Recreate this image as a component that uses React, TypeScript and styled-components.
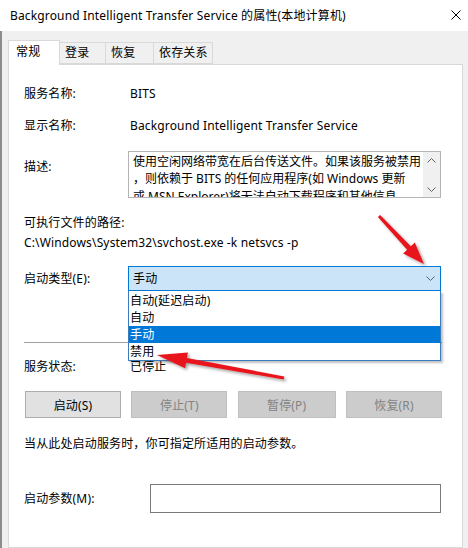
import React from "react";
import styled, { createGlobalStyle } from "styled-components";

const GlobalStyle = createGlobalStyle`
  html, body { margin: 0; padding: 0; background: #ffffff; }
  body {
    font-family: "Noto Sans", "Noto Sans CJK SC", sans-serif;
    font-size: 12px;
    letter-spacing: 0.15px;
    color: #000;
  }
  * { box-sizing: border-box; }
`;

const Window = styled.div`
  position: relative;
  width: 468px;
  height: 548px;
  overflow: hidden;
  background: #f0f0f0;
  display: flex;
  flex-direction: column;
`;

const TitleBar = styled.div`
  height: 31px;
  flex: 0 0 31px;
  background: #ffffff;
  display: flex;
  align-items: center;
  justify-content: space-between;
  padding: 0 7px 0 10px;
  font-size: 12px;
`;

const TitleText = styled.span`
  line-height: 16px;
  white-space: nowrap;
`;

const CloseIcon = styled.svg`
  width: 10px;
  height: 10px;
  margin-bottom: 1px;
`;

const Body = styled.div`
  flex: 1;
  border-left: 2px solid #8c8c8c;
  padding: 9px 5px 0 6px;
  display: flex;
  flex-direction: column;
`;

const TabRow = styled.div`
  display: flex;
  align-items: flex-end;
  height: 24px;
  position: relative;
  z-index: 2;
`;

const Tab = styled.div<{ $w: number; $active?: boolean }>`
  width: ${(p) => p.$w}px;
  height: ${(p) => (p.$active ? 25 : 22)}px;
  margin-bottom: ${(p) => (p.$active ? -1 : 0)}px;
  background: ${(p) => (p.$active ? "#ffffff" : "#f0f0f0")};
  border: 1px solid #d9d9d9;
  border-bottom: ${(p) => (p.$active ? "none" : "1px solid #d9d9d9")};
  border-left: ${(p) => (p.$active ? "1px solid #d9d9d9" : "none")};
  padding-left: ${(p) => (p.$active ? 7 : 5)}px;
  padding-top: ${(p) => (p.$active ? 3 : 2)}px;
  line-height: 16px;
  white-space: nowrap;
`;

const Panel = styled.div`
  flex: 1;
  background: #ffffff;
  border: 1px solid #d9d9d9;
  padding: 21px 20px 0 15px;
  display: flex;
  flex-direction: column;
`;

const Row = styled.div<{ $mt: number }>`
  display: flex;
  align-items: center;
  margin-top: ${(p) => p.$mt}px;
  line-height: 16px;
  position: relative;
`;

const Label = styled.div<{ $w?: number; $pt?: number }>`
  width: ${(p) => p.$w ?? 106}px;
  flex: 0 0 auto;
  white-space: nowrap;
  align-self: ${(p) => (p.$pt ? "flex-start" : "center")};
  padding-top: ${(p) => p.$pt ?? 0}px;
`;

const Value = styled.div`
  white-space: nowrap;
`;

const Line = styled.div<{ $mt: number }>`
  margin-top: ${(p) => p.$mt}px;
  line-height: 16px;
  white-space: nowrap;
`;

const DescBox = styled.div`
  margin-left: -2px;
  width: 313px;
  height: 47px;
  border: 1px solid #b4b4b4;
  display: flex;
  overflow: hidden;
`;

const DescText = styled.div`
  flex: 1;
  padding: 1px 0 0 4px;
  line-height: 17.3px;
  letter-spacing: 0;
  white-space: nowrap;
  overflow: hidden;
`;

const ScrollBar = styled.div`
  width: 17px;
  flex: 0 0 17px;
  background: #f0f0f0;
  display: flex;
  flex-direction: column;
  justify-content: space-between;
  align-items: center;
  padding: 6px 0 5px;
`;

const Chevron = styled.svg`
  width: 9px;
  height: 5px;
`;

const ComboWrap = styled.div`
  position: relative;
  margin-left: -2px;
  width: 313px;
`;

const Combo = styled.div`
  height: 25px;
  background: #cce4f7;
  border: 1px solid #0078d7;
  display: flex;
  align-items: center;
  justify-content: space-between;
  padding: 0 5px 0 4px;
`;

const DropList = styled.div`
  position: absolute;
  left: 0;
  top: 25px;
  width: 313px;
  background: #ffffff;
  border: 1px solid #3a7bbf;
  border-top: none;
  box-shadow: 2px 2px 2px rgba(0, 0, 0, 0.25);
  z-index: 3;
  padding-top: 1px;
`;

const DropItem = styled.div<{ $sel?: boolean }>`
  height: 17px;
  line-height: 17px;
  padding-left: 1px;
  background: ${(p) => (p.$sel ? "#0078d7" : "transparent")};
  color: ${(p) => (p.$sel ? "#ffffff" : "#000")};
  white-space: nowrap;
`;

const Separator = styled.div`
  margin-top: 51px;
  height: 1px;
  background: #a0a0a0;
`;

const ButtonRow = styled.div`
  margin-top: 16px;
  margin-left: 1px;
  display: flex;
  justify-content: space-between;
`;

const Btn = styled.div<{ $disabled?: boolean; $w: number }>`
  width: ${(p) => p.$w}px;
  height: 27px;
  display: flex;
  align-items: center;
  justify-content: center;
  background: ${(p) => (p.$disabled ? "#cccccc" : "#e1e1e1")};
  border: 1px solid ${(p) => (p.$disabled ? "#bfbfbf" : "#adadad")};
  color: ${(p) => (p.$disabled ? "#838383" : "#000")};
  white-space: nowrap;
`;

const Input = styled.div`
  width: 291px;
  height: 29px;
  border: 1px solid #7a7a7a;
  background: #fff;
`;

const Overlay = styled.svg`
  position: absolute;
  left: 0;
  top: 0;
  width: 468px;
  height: 548px;
  pointer-events: none;
  z-index: 10;
`;

type Pt = [number, number];

function arrowPoints(tail: Pt, tip: Pt, wt: number, ws: number, hl: number, hw: number): string {
  const dx = tip[0] - tail[0];
  const dy = tip[1] - tail[1];
  const len = Math.hypot(dx, dy);
  const ux = dx / len;
  const uy = dy / len;
  const nx = -uy;
  const ny = ux;
  const bx = tip[0] - ux * hl;
  const by = tip[1] - uy * hl;
  const pts: Pt[] = [
    [tail[0] + (nx * wt) / 2, tail[1] + (ny * wt) / 2],
    [bx + (nx * ws) / 2, by + (ny * ws) / 2],
    [bx + (nx * hw) / 2, by + (ny * hw) / 2],
    tip,
    [bx - (nx * hw) / 2, by - (ny * hw) / 2],
    [bx - (nx * ws) / 2, by - (ny * ws) / 2],
    [tail[0] - (nx * wt) / 2, tail[1] - (ny * wt) / 2],
  ];
  return pts.map((p) => `${p[0].toFixed(1)},${p[1].toFixed(1)}`).join(" ");
}

const ChevronDown = () => (
  <Chevron viewBox="0 0 9 5">
    <polyline points="0.5,0.5 4.5,4.5 8.5,0.5" fill="none" stroke="#606060" strokeWidth="1" />
  </Chevron>
);

const ChevronUp = () => (
  <Chevron viewBox="0 0 9 5">
    <polyline points="0.5,4.5 4.5,0.5 8.5,4.5" fill="none" stroke="#606060" strokeWidth="1" />
  </Chevron>
);

export default function App() {
  const tabs = [
    { t: "常规", w: 52, active: true },
    { t: "登录", w: 46 },
    { t: "恢复", w: 48 },
    { t: "依存关系", w: 59 },
  ];
  return (
    <>
      <GlobalStyle />
      <Window>
        <TitleBar>
          <TitleText>Background Intelligent Transfer Service 的属性(本地计算机)</TitleText>
          <CloseIcon viewBox="0 0 10 10">
            <path d="M0.5 0.5 L9.5 9.5 M9.5 0.5 L0.5 9.5" stroke="#000" strokeWidth="1" fill="none" />
          </CloseIcon>
        </TitleBar>
        <Body>
          <TabRow>
            {tabs.map((tb) => (
              <Tab key={tb.t} $w={tb.w} $active={tb.active}>
                {tb.t}
              </Tab>
            ))}
          </TabRow>
          <Panel>
            <Row $mt={0}>
              <Label>服务名称:</Label>
              <Value>BITS</Value>
            </Row>
            <Row $mt={16}>
              <Label>显示名称:</Label>
              <Value>Background Intelligent Transfer Service</Value>
            </Row>
            <Row $mt={17}>
              <Label $pt={8}>描述:</Label>
              <DescBox>
                <DescText>
                  <div>使用空闲网络带宽在后台传送文件。如果该服务被禁用</div>
                  <div>，则依赖于 BITS 的任何应用程序(如 Windows 更新</div>
                  <div>或 MSN Explorer)将无法自动下载程序和其他信息</div>
                </DescText>
                <ScrollBar>
                  <ChevronUp />
                  <ChevronDown />
                </ScrollBar>
              </DescBox>
            </Row>
            <Line $mt={17}>可执行文件的路径:</Line>
            <Line $mt={4}>C:\Windows\System32\svchost.exe -k netsvcs -p</Line>
            <Row $mt={15}>
              <Label>启动类型(E):</Label>
              <ComboWrap>
                <Combo>
                  <span>手动</span>
                  <ChevronDown />
                </Combo>
                <DropList>
                  <DropItem>自动(延迟启动)</DropItem>
                  <DropItem>自动</DropItem>
                  <DropItem $sel>手动</DropItem>
                  <DropItem>禁用</DropItem>
                </DropList>
              </ComboWrap>
            </Row>
            <Separator />
            <Row $mt={16}>
              <Label>服务状态:</Label>
              <Value>已停止</Value>
            </Row>
            <ButtonRow>
              <Btn $w={96}>启动(S)</Btn>
              <Btn $w={96} $disabled>停止(T)</Btn>
              <Btn $w={98} $disabled>暂停(P)</Btn>
              <Btn $w={96} $disabled>恢复(R)</Btn>
            </ButtonRow>
            <Line $mt={18}>当从此处启动服务时，你可指定所适用的启动参数。</Line>
            <Row $mt={32}>
              <Label $w={126}>启动参数(M):</Label>
              <Input />
            </Row>
          </Panel>
        </Body>
        <Overlay viewBox="0 0 468 548">
          <defs>
            <filter id="sh" x="-20%" y="-20%" width="140%" height="140%">
              <feDropShadow dx="2" dy="2" stdDeviation="1.5" floodColor="#000" floodOpacity="0.35" />
            </filter>
          </defs>
          <polygon
            points={arrowPoints([379, 216], [424, 264], 3, 5, 22, 16)}
            fill="#e8171d"
            filter="url(#sh)"
          />
          <polygon
            points={arrowPoints([284, 378], [157, 355], 3, 5, 30, 16)}
            fill="#e8171d"
            filter="url(#sh)"
          />
        </Overlay>
      </Window>
    </>
  );
}
